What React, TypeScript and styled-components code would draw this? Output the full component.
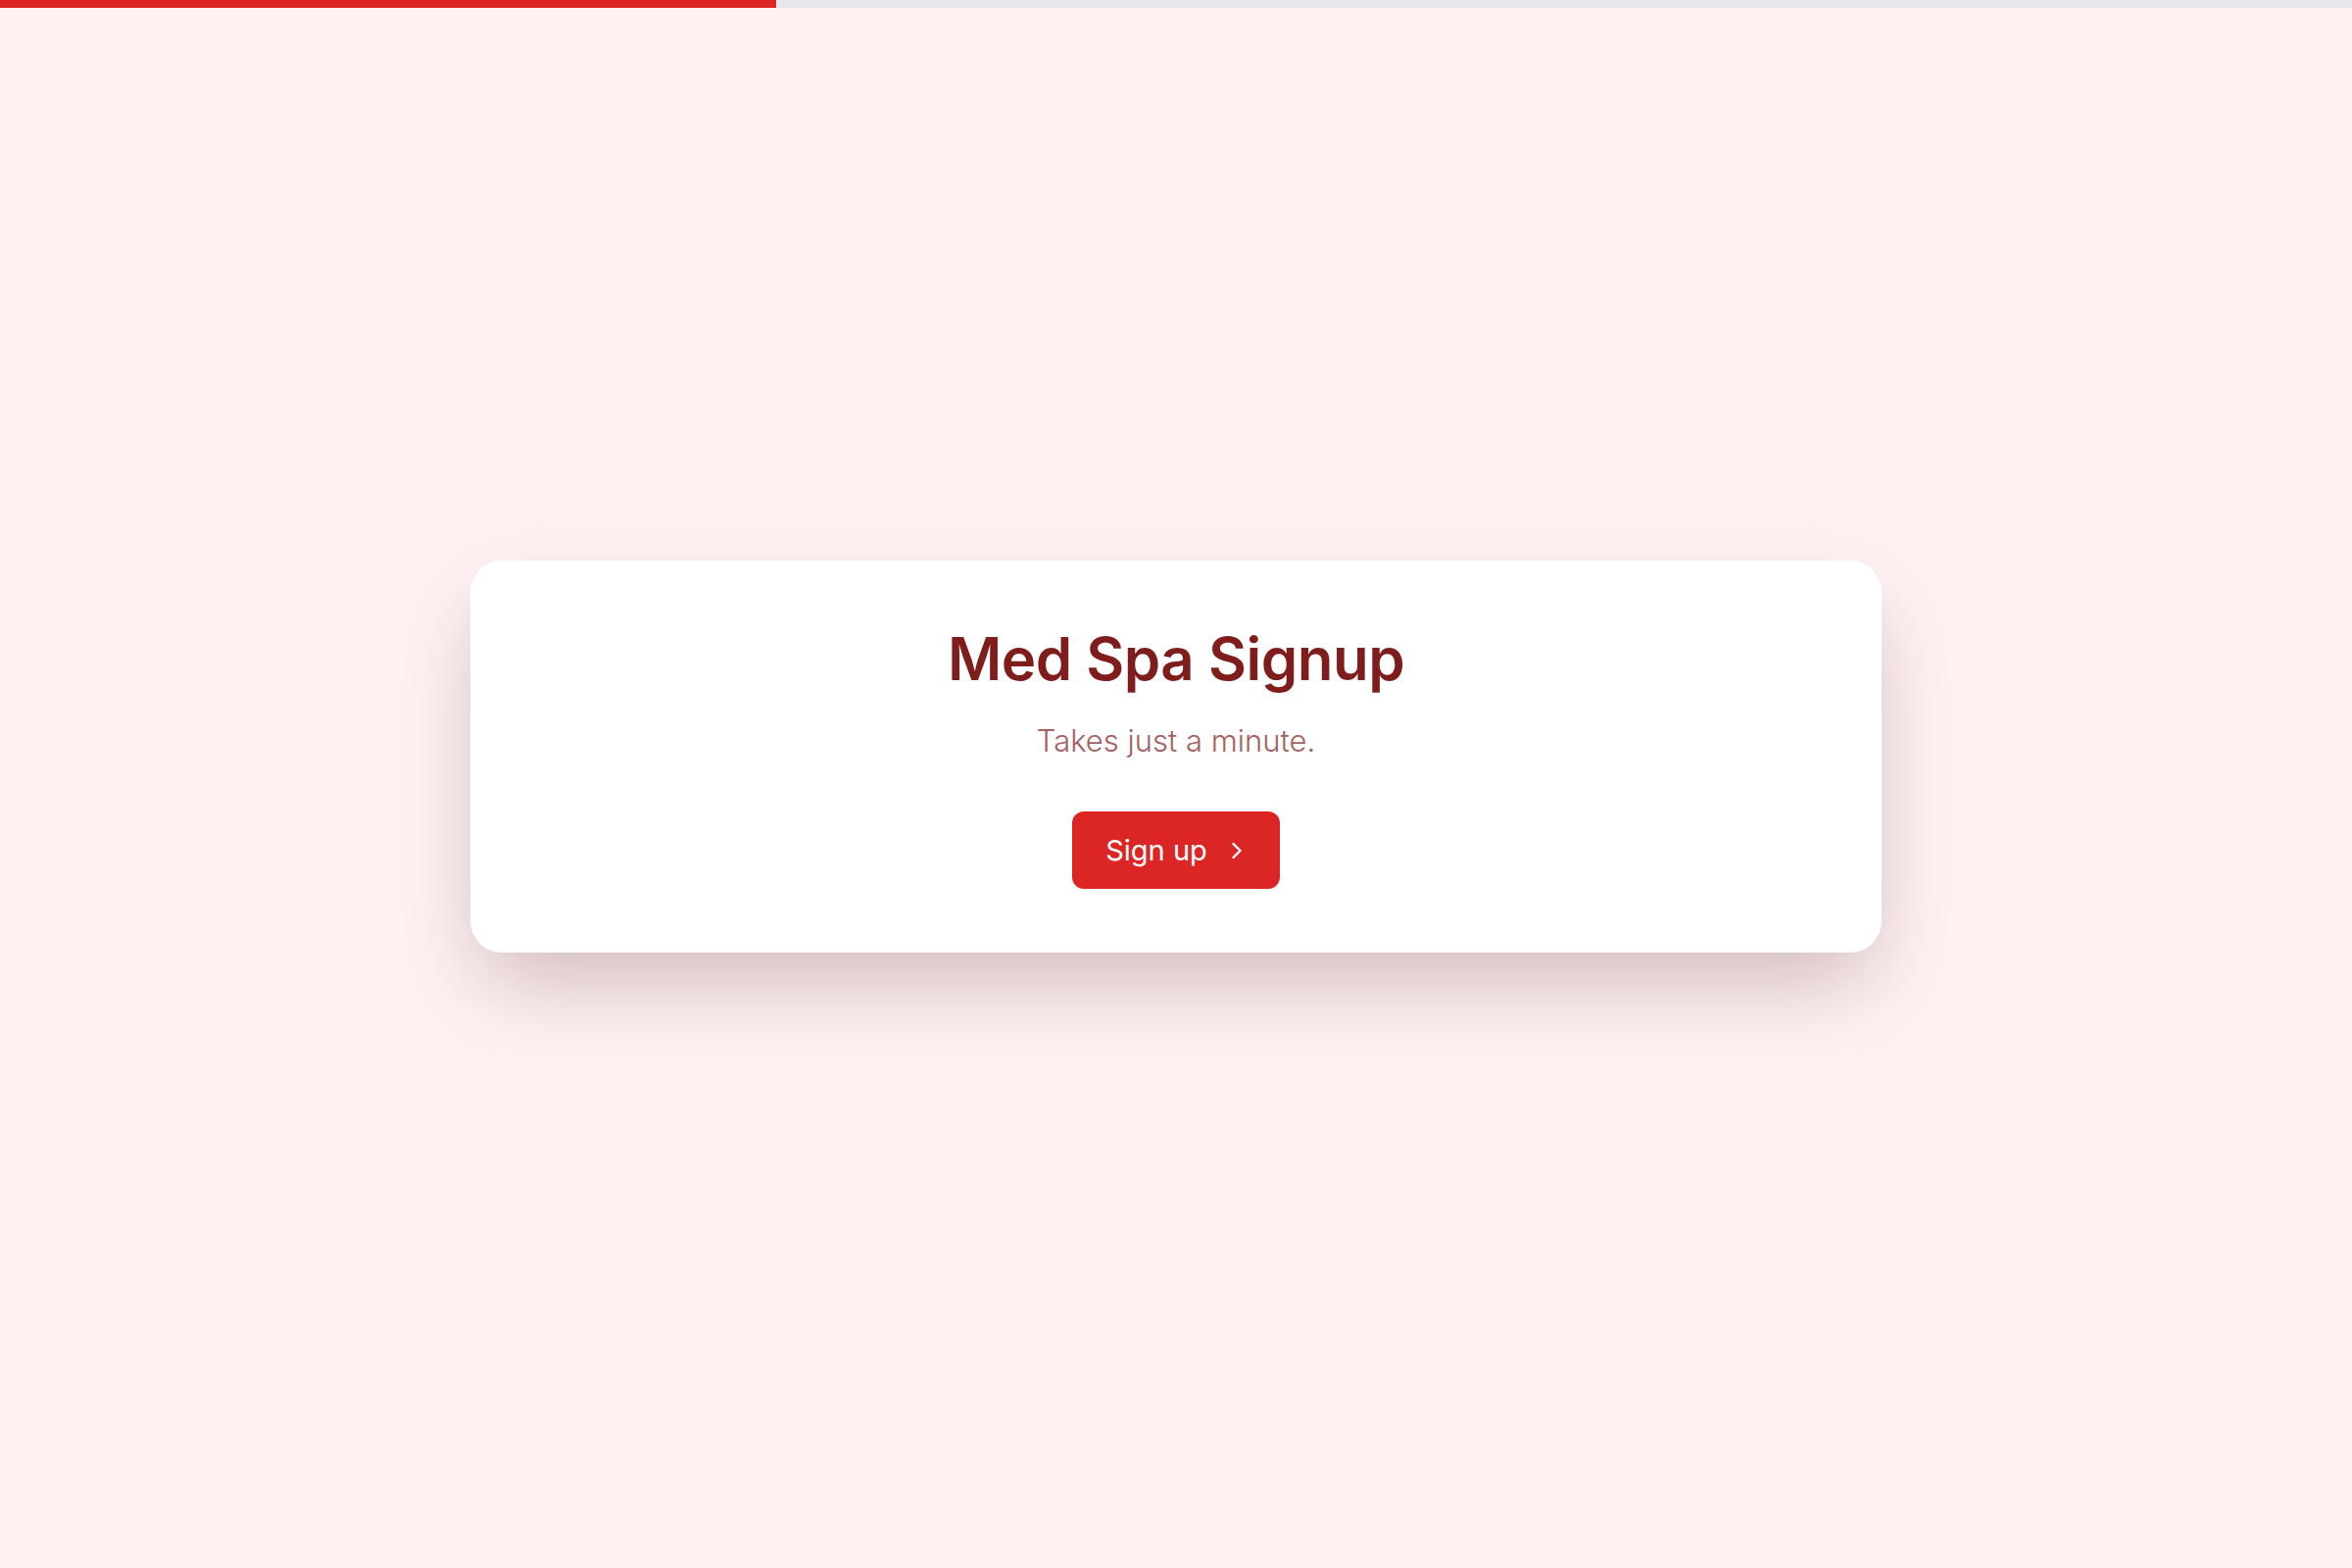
import React from "react";
import styled, { createGlobalStyle } from "styled-components";
import { ChevronRight } from "lucide-react";

const GlobalStyle = createGlobalStyle`
  * { box-sizing: border-box; }
  html, body {
    margin: 0;
    padding: 0;
    background: #fff1f2;
    font-family: Inter, "Noto Sans", "Liberation Sans", sans-serif;
  }
`;

const progress = 33;

const App = () => {
  return (
    <>
      <GlobalStyle />
      <Page>
        <Track>
          <Fill style={{ width: `${progress}%` }} />
        </Track>
        <Main>
          <Card>
            <Title>Med Spa Signup</Title>
            <Subtitle>Takes just a minute.</Subtitle>
            <Button type="button">
              Sign up
              <ChevronRight size={28} strokeWidth={2} />
            </Button>
          </Card>
        </Main>
      </Page>
    </>
  );
};

export default App;

const Page = styled.div`
  min-height: 100vh;
  display: flex;
  flex-direction: column;
  padding-bottom: 64px;
`;

const Track = styled.div`
  height: 8px;
  width: 100%;
  background: #e5e7eb;
`;

const Fill = styled.div`
  height: 100%;
  background: #dc2626;
`;

const Main = styled.main`
  flex: 1;
  display: flex;
  align-items: center;
  justify-content: center;
`;

const Card = styled.section`
  width: 1440px;
  height: 400px;
  background: #fff;
  border-radius: 32px;
  box-shadow: 0 40px 90px -12px rgba(70, 30, 30, 0.26);
  display: flex;
  flex-direction: column;
  align-items: center;
  padding-top: 64px;
`;

const Title = styled.h1`
  margin: 0;
  font-size: 60px;
  line-height: 1.2;
  font-weight: 600;
  color: #7f1d1d;
  letter-spacing: -0.5px;
`;

const Subtitle = styled.p`
  margin: 28px 0 0;
  font-size: 31px;
  line-height: 1.3;
  font-weight: 300;
  color: #a56161;
`;

const Button = styled.button`
  margin-top: 52px;
  height: 79px;
  padding: 0 30px 0 34px;
  display: flex;
  align-items: center;
  gap: 16px;
  border: none;
  border-radius: 12px;
  background: #dc2626;
  color: #fff;
  font-family: inherit;
  font-size: 29px;
  font-weight: 400;
  cursor: pointer;
`;
